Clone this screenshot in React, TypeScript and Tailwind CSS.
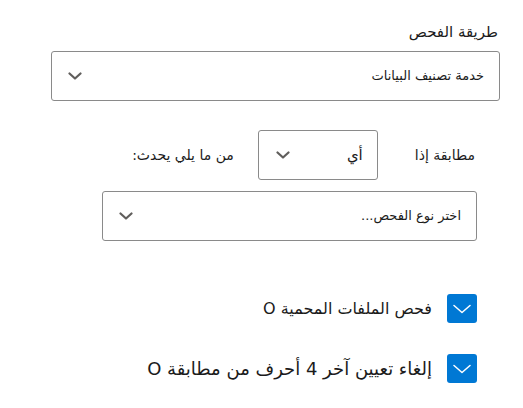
import React from "react";

const Chevron = () => (
  <svg width="14" height="8" viewBox="0 0 14 8" className="shrink-0">
    <polyline points="1.5,1.5 7,6.5 12.5,1.5" fill="none" stroke="#605e5c" strokeWidth="2.2" strokeLinecap="round" strokeLinejoin="round" />
  </svg>
);

const Check = () => (
  <div className="w-[30px] h-[29px] rounded-[3px] bg-[#0078d4] flex items-center justify-center shrink-0">
    <svg width="18" height="10" viewBox="0 0 18 10">
      <polyline points="1,1.5 9,8.5 17,1.5" fill="none" stroke="#ffffff" strokeWidth="1.5" strokeLinecap="round" strokeLinejoin="round" />
    </svg>
  </div>
);

export default function App() {
  const font = { fontFamily: '"DejaVu Sans", "Noto Sans", sans-serif' };
  return (
    <div dir="rtl" className="w-[523px] h-[408px] bg-white text-[#1b1b1b] pr-[23px] pt-[21px] overflow-hidden" style={font}>
      <div className="text-[15px] leading-[22px] pr-[2px]">طريقة الفحص</div>
      <div className="mt-[8px] w-[449px] h-[50px] border border-[#8a8a8a] rounded-[3px] flex items-center justify-between pr-[15px] pl-[16px]">
        <span className="text-[13px]">خدمة تصنيف البيانات</span>
        <Chevron />
      </div>
      <div className="mt-[29px] mr-[25px] flex items-center">
        <span className="text-[14px] whitespace-nowrap shrink-0">مطابقة إذا</span>
        <div className="mr-[37px] w-[120px] h-[50px] border border-[#8a8a8a] rounded-[3px] flex items-center justify-between pr-[14px] pl-[17px] shrink-0">
          <span className="text-[15px]">أي</span>
          <Chevron />
        </div>
        <span className="mr-[24px] text-[14px] whitespace-nowrap">من ما يلي يحدث:</span>
      </div>
      <div className="mt-[11px] mr-[23px] w-[375px] h-[50px] border border-[#8a8a8a] rounded-[3px] flex items-center justify-between pr-[15px] pl-[16px]">
        <span className="text-[13px]">اختر نوع الفحص...</span>
        <Chevron />
      </div>
      <div className="mt-[53px] mr-[23px] flex items-center">
        <Check />
        <span className="mr-[15px] text-[16px]">فحص الملفات المحمية O</span>
      </div>
      <div className="mt-[31px] mr-[23px] flex items-center">
        <Check />
        <span className="mr-[15px] text-[18px]">إلغاء تعيين آخر 4 أحرف من مطابقة O</span>
      </div>
    </div>
  );
}
